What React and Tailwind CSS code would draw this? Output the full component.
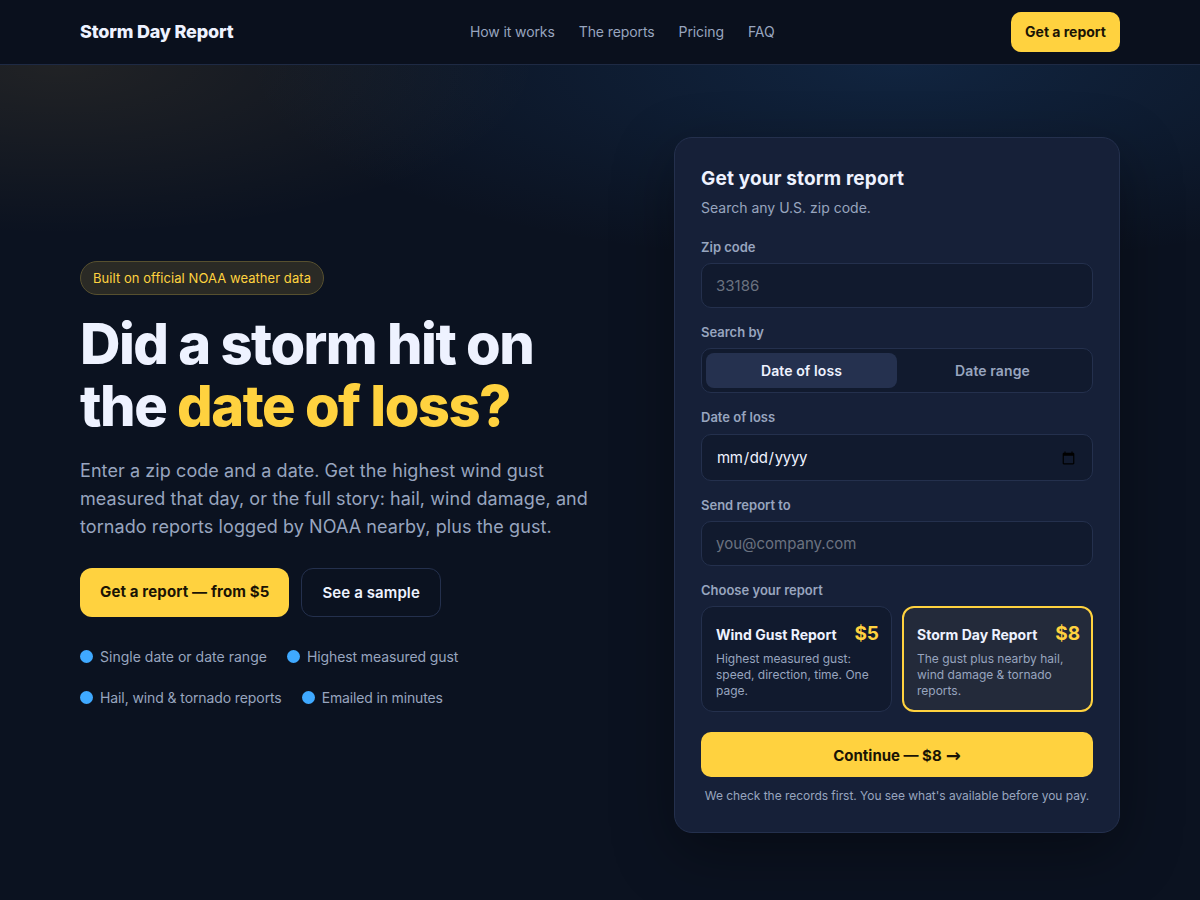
import React from "react";

const navLinks = ["How it works", "The reports", "Pricing", "FAQ"];

const Bullet = ({ children, className = "" }) => (
  <span className={`flex items-center gap-[7px] text-sm text-[#98a5bf] ${className}`}>
    <span className="h-[13px] w-[13px] rounded-full bg-[#3fa9ff]"></span>
    {children}
  </span>
);

const Label = ({ children }) => (
  <label className="mb-2 block text-[13px] leading-4 font-semibold text-[#98a5bf]">
    {children}
  </label>
);

const inputClass =
  "block w-full rounded-[10px] border border-[#24304d] bg-[#111a2e] px-[14px] text-[15px] text-[#eef2ff] placeholder:text-[#6b7280] outline-none";

const App = () => {
  return (
    <div className="min-h-[900px] bg-[#0b1220] font-['Inter',sans-serif] text-[#eef2ff]">
      <header className="h-[65px] border-b border-[#1e2a44] bg-[#0a101d]">
        <div className="flex h-16 items-center justify-between px-20">
          <div className="text-lg font-extrabold tracking-[-0.18px]">Storm Day Report</div>
          <nav className="flex gap-6 text-sm tracking-[-0.1px] text-[#98a5bf]">
            {navLinks.map((link) => (
              <a key={link}>{link}</a>
            ))}
          </nav>
          <button className="h-10 rounded-[10px] bg-[#ffd23f] px-[14px] text-sm font-bold text-[#1a1405]">
            Get a report
          </button>
        </div>
      </header>

      <section className="bg-[radial-gradient(480px_170px_at_60px_0px,rgba(255,200,90,0.09),transparent_100%),radial-gradient(650px_200px_at_75%_0px,rgba(40,110,190,0.2),transparent_100%)] px-20 pt-[72px] pb-[67px]">
        <div className="grid grid-cols-[1fr_446px] items-center gap-14">
          <div className="pb-[2px]">
            <span className="inline-block h-[34px] rounded-full border border-[#57502f] bg-[#2a2a25] px-3 text-[13px] leading-8 tracking-[0.06px] text-[#ffd23f]">
              Built on official NOAA weather data
            </span>
            <h1 className="mt-[18px] text-[56px] leading-[62px] font-extrabold tracking-[-1.5px] text-[#eef2ff]">
              Did a storm hit on
              <br />
              the <span className="text-[#ffd23f]">date of loss?</span>
            </h1>
            <p className="mt-5 w-[520px] text-lg leading-7 tracking-[0.08px] text-[#98a5bf]">
              Enter a zip code and a date. Get the highest wind gust measured that day, or the full story: hail, wind damage, and tornado reports logged by NOAA nearby, plus the gust.
            </p>
            <div className="mt-[27px] flex gap-3">
              <button className="h-[49px] rounded-xl bg-[#ffd23f] px-5 pt-px text-[15px] font-bold tracking-[0.14px] text-[#1a1405]">
                Get a report — from $5
              </button>
              <button className="h-[49px] rounded-xl border border-[#24304d] px-5 pt-[2px] text-[15px] font-semibold tracking-[0.1px] text-[#eef2ff]">
                See a sample
              </button>
            </div>
            <div className="mt-[30px] flex flex-col gap-[21px]">
              <div className="flex h-5 gap-5">
                <Bullet className="tracking-[0.02px]">Single date or date range</Bullet>
                <Bullet className="tracking-[-0.1px]">Highest measured gust</Bullet>
              </div>
              <div className="flex h-5 gap-5">
                <Bullet className="tracking-[-0.1px]">Hail, wind & tornado reports</Bullet>
                <Bullet className="tracking-[-0.15px]">Emailed in minutes</Bullet>
              </div>
            </div>
          </div>

          <form className="rounded-[18px] border border-[#24304d] bg-[#162038] px-[26px] pt-[26px] pb-[28px] shadow-[0_20px_60px_rgba(0,0,0,0.35)]">
            <h2 className="pt-px text-[19px] leading-7 font-bold tracking-[0.15px]">Get your storm report</h2>
            <p className="mt-[5px] text-sm leading-5 text-[#98a5bf]">Search any U.S. zip code.</p>

            <div className="mt-[21px]">
              <Label>Zip code</Label>
              <input className={`${inputClass} h-[45px]`} placeholder="33186" />
            </div>

            <div className="mt-4">
              <Label>Search by</Label>
              <div className="flex h-[45px] rounded-[10px] border border-[#24304d] bg-[#111a2e] p-1">
                <div className="flex flex-1 items-center justify-center rounded-lg bg-[#25314f] text-sm font-semibold tracking-[0.1px] text-[#eef2ff]">
                  Date of loss
                </div>
                <div className="flex flex-1 items-center justify-center text-sm font-semibold tracking-[0.1px] text-[#98a5bf]">
                  Date range
                </div>
              </div>
            </div>

            <div className="mt-4">
              <Label>Date of loss</Label>
              <input type="date" className={`${inputClass} mt-[9px] h-[47px] pt-[2px] tracking-[-0.3px]`} />
            </div>

            <div className="mt-4">
              <Label>Send report to</Label>
              <input className={`${inputClass} h-[45px]`} placeholder="you@company.com" />
            </div>

            <div className="mt-4">
              <Label>Choose your report</Label>
              <div className="grid grid-cols-2 gap-[10px]">
                <div className="h-[106px] rounded-xl border border-[#24304d] bg-[#111a2e] pt-[17px] pr-3 pl-[14px]">
                  <div className="flex items-center justify-between">
                    <span className="pt-[2px] text-sm leading-4 font-bold text-[#eef2ff]">Wind Gust Report</span>
                    <span className="text-[19px] leading-5 font-bold text-[#ffd23f]">$5</span>
                  </div>
                  <p className="mt-[7px] text-xs leading-4 text-[#98a5bf]">
                    Highest measured gust: speed, direction, time. One page.
                  </p>
                </div>
                <div className="h-[106px] rounded-xl border-2 border-[#ffd23f] bg-[#232a3a] pt-4 pr-[11px] pl-[13px]">
                  <div className="flex items-center justify-between">
                    <span className="pt-[2px] text-sm leading-4 font-bold text-[#eef2ff]">Storm Day Report</span>
                    <span className="text-[19px] leading-5 font-bold text-[#ffd23f]">$8</span>
                  </div>
                  <p className="mt-[7px] text-xs leading-4 text-[#98a5bf]">
                    The gust plus nearby hail, wind damage & tornado reports.
                  </p>
                </div>
              </div>
            </div>

            <button type="button" className="mt-5 flex h-[45px] w-full items-center justify-center gap-1 rounded-[10px] bg-[#ffd23f] pt-[2px] text-[15px] leading-[22px] font-bold text-[#1a1405]">
              Continue — $8 <span className="font-['DejaVu_Sans',sans-serif] text-lg leading-[22px]">→</span>
            </button>
            <p className="mt-[11px] text-center text-xs leading-4 tracking-[-0.04px] text-[#98a5bf]">
              We check the records first. You see what's available before you pay.
            </p>
          </form>
        </div>
      </section>
    </div>
  );
};

export default App;
